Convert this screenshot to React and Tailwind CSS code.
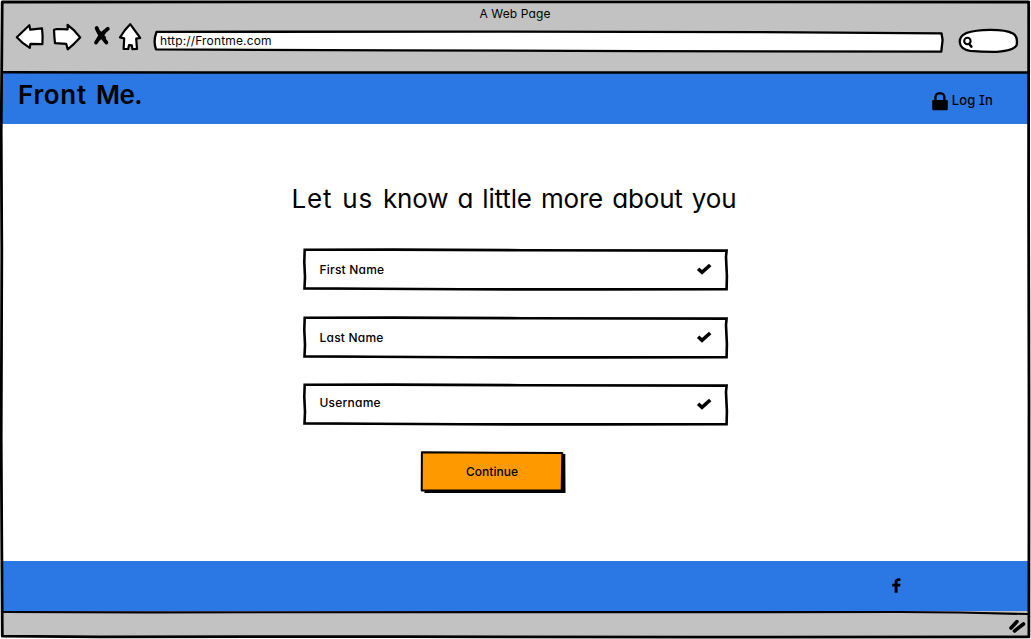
import React from "react";

const line = { fill: "none", stroke: "#000", strokeLinecap: "round", strokeLinejoin: "round" };

function NavIcons() {
  return (
    <svg className="h-[32px] w-[130px] shrink-0" viewBox="14 21 130 32" fill="#fff" stroke="#000" strokeWidth="2.2" strokeLinejoin="round" strokeLinecap="round">
      <path d="M16.8 37.2 29.3 25.2 30.3 29.7 42 28.4 42.6 36 42.4 44.2 30.4 43.8 29.8 47.9 23 43.2Z" />
      <path d="M54 29.8 57 29 67.7 29.4 67.6 24.8 73.5 29.8 80.2 37.4 74 43.8 67.7 49.3 66.2 43.8 55 43.2 54.4 37Z" />
      <path d="M96.6 28Q98.6 33.5 106.4 42.5" fill="none" strokeWidth="3.8" />
      <path d="M107.8 28.8Q101 34 96 42.6" fill="none" strokeWidth="3.8" />
      <path d="M99.5 33 104 38M103.6 32.6 99 38.4" fill="none" strokeWidth="4.2" />
      <path d="M130.2 24.2 140.2 37.8 136.2 38.6 137 49 132.4 49.2 131.8 45.4 129 45.2 128.2 49 123.6 49 124.2 38.4 120 37.4 125 30Z" />
    </svg>
  );
}

function AddressBar() {
  return (
    <div className="relative ml-[8px] flex h-[24px] w-[794px] items-center pl-[8px]">
      <svg className="absolute inset-0 h-full w-full" viewBox="152 29 794 24" {...line} strokeWidth="2.3">
        <path fill="#fff" d="M156.5 31.8 500 31.6 800 32.3 941.5 33.3 942.6 40 941.3 51.6 640 51.1 400 50.4 156 49.4Q153 41 156.5 31.8Z" />
      </svg>
      <span className="relative text-[12px] leading-[16px] tracking-[0.16px] whitespace-nowrap">http://Frontme.com</span>
    </div>
  );
}

function SearchPill() {
  return (
    <svg className="ml-[11px] h-[28px] w-[64px] shrink-0" viewBox="957 27 64 28" {...line} strokeWidth="2.3">
      <path fill="#fff" d="M966 33.2Q975 30 990 29.9 1006 29.8 1013 33.5 1018 36.5 1016.7 45 1014 50.5 997 51.8 984 52 970 50.8 960.5 49.5 959.7 42 959.6 36 966 33.2Z" />
      <circle cx="967.4" cy="41" r="3.2" strokeWidth="2.1" />
      <path d="M969.4 44.2 971.4 46.6" strokeWidth="2.5" />
    </svg>
  );
}

function Field({ label, className, labelClass }) {
  return (
    <div className={`relative flex h-[44px] w-[428px] items-center justify-between pr-[18px] pl-[18px] ${className}`}>
      <svg className="absolute inset-0 h-full w-full" viewBox="0 0 428 44" {...line} strokeLinejoin="miter" strokeWidth="2.6">
        <path d="M2.7 2.8 90 2.6 220 3.2 424.6 3.6 424 10 424.9 29 424.6 42.3 300 42.4 160 42.3 70 41.8 2.5 41.4 3 30 2.3 15Z" />
      </svg>
      <span className={`relative text-[12px] leading-[16px] font-medium tracking-[0.22px] whitespace-nowrap ${labelClass}`}>{label}</span>
      <svg className="relative h-[12px] w-[16px]" viewBox="0 0 16 12" fill="none" stroke="#000" strokeWidth="3.6">
        <path d="M2.1 5.8 6 9.4 14.2 2" />
      </svg>
    </div>
  );
}

function WindowFrame() {
  return (
    <svg className="pointer-events-none absolute inset-0 h-[639px] w-[1031px]" viewBox="0 0 1031 639" {...line}>
      <path strokeWidth="2.8" d="M2.2 2 500 1.9 1028.7 2 1028.6 200 1029 400 1028.9 636.8 700 637.2 400 636.6 100 636.8 2.3 636.2 1.2 440 1.8 250 1.2 130Z" />
      <path strokeWidth="2.5" d="M2 72.3 200 72.6 500 72.6 1028 72.4" />
      <path strokeWidth="2.2" d="M2 612 150 612.3 900 612 960 612.5 1028 614" />
      <path strokeWidth="3.6" d="M1011 628 1017 621.6M1014.5 631 1023.5 624" />
    </svg>
  );
}

export default function App() {
  return (
    <div className="relative flex h-[639px] w-[1031px] flex-col overflow-hidden bg-white font-['Inter','Noto_Sans',sans-serif] text-black [font-feature-settings:'cv11','cv08']">
      <header className="mx-[2px] mt-[2px] h-[71px] shrink-0 bg-[#c2c2c2]">
        <div className="h-[19px] pt-[4px] pr-[1px] text-center text-[12px] leading-[16px] tracking-[0.12px]">A Web Page</div>
        <div className="flex h-[32px] items-start pl-[12px]">
          <NavIcons />
          <div className="flex pt-[8px]">
            <AddressBar />
          </div>
          <div className="pt-[6px]">
            <SearchPill />
          </div>
        </div>
      </header>
      <nav className="mr-[3px] ml-[2px] flex h-[51px] shrink-0 items-start justify-between bg-[#2b78e4] pr-[35px] pl-[16px]">
        <h1 className="pt-[6px] text-[26px] leading-[32px] font-semibold whitespace-nowrap">
          <span className="tracking-[0.7px] [word-spacing:2px]">Front </span>
          <span className="tracking-[-0.6px]">Me.</span>
        </h1>
        <a className="flex items-start pt-[18px]">
          <svg className="h-[20px] w-[16px]" viewBox="0 0 16 20">
            <path d="M3.4 10V6.5Q3.6 2.2 7.9 2.1 12.2 2.2 12.4 6.5V10" fill="none" stroke="#000" strokeWidth="2.4" />
            <rect x=".2" y="9" width="15.6" height="10.2" rx="1.2" />
          </svg>
          <span className="ml-[4px] pt-px text-[13px] leading-[16px] font-medium tracking-[0.15px] whitespace-nowrap">Log In</span>
        </a>
      </nav>
      <main className="flex h-[437px] shrink-0 flex-col items-center">
        <h2 className="mt-[55px] h-[40px] pr-[3px] text-[26px] leading-[40px] whitespace-nowrap [word-spacing:2px]">
          <span className="tracking-[0.75px]">Let us </span>
          <span className="tracking-[-0.17px]">know a little more about you</span>
        </h2>
        <Field label="First Name" className="mt-[28px]" labelClass="top-px" />
        <Field label="Last Name" className="mt-[24px]" labelClass="top-px" />
        <Field label="Username" className="mt-[23px]" labelClass="-top-px" />
        <button className="relative mt-[24px] mr-[45px] flex h-[44px] w-[148px] items-center justify-center text-[12px] leading-[16px]">
          <svg className="absolute inset-0 h-full w-full" viewBox="419.5 450 148 44" {...line}>
            <path fill="#000" stroke="none" d="M425 455 565.8 454 566 493 425 493Z" />
            <path fill="#ff9900" strokeWidth="2" d="M422.4 452.3 500 452.8 562.8 453 562.2 490.5 422.2 490.4Z" />
          </svg>
          <span className="relative pr-[2px] font-medium">Continue</span>
        </button>
      </main>
      <footer className="mr-[3px] ml-[2px] flex h-[50px] shrink-0 items-center justify-end bg-[#2b78e4] pr-[127px]">
        <svg className="h-[16px] w-[9px]" viewBox="0 0 9 16">
          <path d="M8.4.4V3.1H6.9Q5.6 3.1 5.6 4.3V5.7H8.5L8.1 8.6H5.6V14.8H2.6V8.6H.1V5.7H2.6V4.1Q2.6.7 6.1.3Q7.6.2 8.4.4Z" />
        </svg>
      </footer>
      <div className="mr-[2px] ml-[2px] h-[25px] shrink-0 bg-[#c2c2c2]" />
      <WindowFrame />
    </div>
  );
}
